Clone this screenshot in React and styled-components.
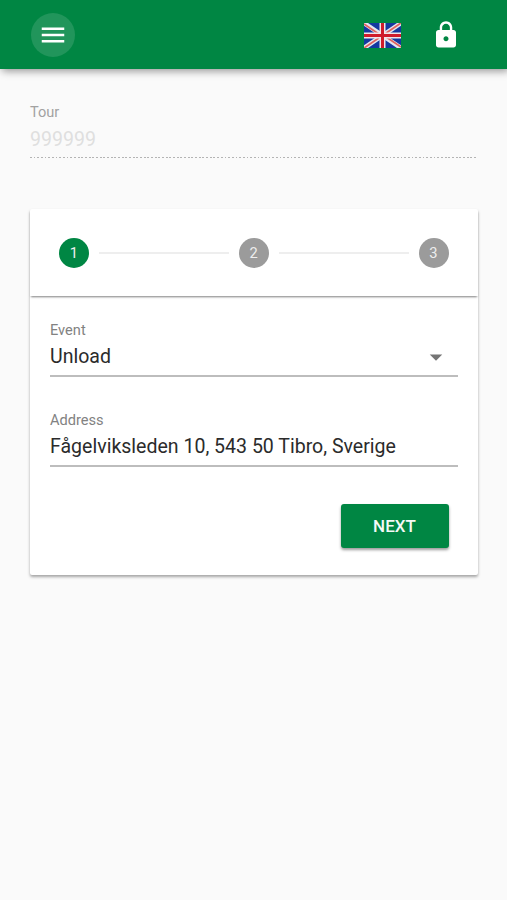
import React from 'react';
import styled, { createGlobalStyle } from 'styled-components';

const GlobalStyle = createGlobalStyle`
  * {
    box-sizing: border-box;
  }

  body {
    margin: 0;
    background-color: #fafafa;
    font-family: Roboto, sans-serif;
    color: #212121;
  }
`;

const Page = styled.div`
  min-height: 900px;
`;

const Toolbar = styled.header`
  display: flex;
  align-items: center;
  height: 69px;
  padding: 1px 46px 0 30.5px;
  background-color: #008643;
  box-shadow: 2px 2px 8px rgba(0, 0, 0, 0.42);
`;

const MenuButton = styled.button`
  display: flex;
  align-items: center;
  justify-content: center;
  width: 44px;
  height: 44px;
  margin-right: auto;
  padding: 0;
  border: 0;
  border-radius: 50%;
  background-color: #21955b;
`;

const Icon = styled.svg`
  display: block;
  width: ${({ $size }) => $size}px;
  height: ${({ $size }) => $size}px;
  fill: ${({ $color }) => $color || '#ffffff'};
`;

const Flag = styled.svg`
  display: block;
  width: 37px;
  height: 25px;
  margin-right: 30px;
`;

const Content = styled.main`
  padding: 34px 29.5px 0 30px;
`;

const Field = styled.div`
  height: 56px;
  border-bottom: 2px solid #bdbdbd;
`;

const DisabledField = styled(Field)`
  height: 55px;
  border-bottom: 0;
  background: repeating-linear-gradient(
      to right,
      #b4b4b4 0,
      #b4b4b4 1.8px,
      transparent 1.8px,
      transparent 3.67px
    )
    0 100% / 100% 1.5px no-repeat;
`;

const Label = styled.div`
  font-size: 14.6px;
  line-height: 18px;
  color: ${({ $disabled }) => ($disabled ? '#a2a2a2' : '#828282')};
`;

const Value = styled.div`
  display: flex;
  align-items: center;
  justify-content: space-between;
  height: 24px;
  margin-top: ${({ $disabled }) => ($disabled ? 7 : 6)}px;
  padding-right: 7px;
  font-size: 19.55px;
  line-height: 24px;
  white-space: nowrap;
  color: ${({ $disabled }) => ($disabled ? '#dfdfdf' : '#2b2b2b')};
`;

const Card = styled.section`
  margin-top: 51px;
  border-radius: 2px;
  background-color: #ffffff;
  box-shadow: 0 2px 3px rgba(0, 0, 0, 0.34);
`;

const Steps = styled.div`
  display: flex;
  align-items: center;
  gap: 10px;
  height: 87px;
  padding: 0 29px;
  box-shadow: 0 2px 2px -1px rgba(0, 0, 0, 0.5);
`;

const Step = styled.div`
  flex: none;
  width: 30px;
  height: 30px;
  border-radius: 50%;
  background-color: ${({ $active }) => ($active ? '#008643' : '#9b9b9b')};
  font-size: 14.7px;
  line-height: 30px;
  text-align: center;
  color: #eeeeee;
`;

const StepLine = styled.div`
  flex: 1;
  height: 2px;
  background-color: #eeeeee;
`;

const Form = styled.div`
  display: flex;
  flex-direction: column;
  gap: 34px;
  height: 279px;
  padding: 24.5px 19.5px 0 20px;
`;

const NextButton = styled.button`
  align-self: flex-end;
  width: 108px;
  height: 44px;
  margin: 3.5px 9.5px 0 0;
  padding: 0;
  border: 0;
  border-radius: 3px;
  background-color: #008643;
  box-shadow: 0 2px 3px rgba(0, 0, 0, 0.4);
  font-family: inherit;
  font-size: 17px;
  font-weight: 500;
  line-height: 44px;
  color: #f4faf6;
`;

const UnionJack = () => (
  <Flag viewBox="0 0 37 25" preserveAspectRatio="none">
    <path fill="#1538a0" d="M0 0h37v25H0z" />
    <path stroke="#e4e6f0" strokeWidth="4.5" d="M0 0l37 25M37 0L0 25" />
    <path stroke="#e0625f" strokeWidth="1.8" d="M0 1l17 11.5M37 0L20 11.5M37 24L20 12.5M0 25l17-11.5" />
    <path stroke="#f0e6ea" strokeWidth="6" d="M18.5 0v25M0 12.5h37" />
    <path stroke="#cf1b2b" strokeWidth="3" d="M18.5 0v25M0 12.5h37" />
  </Flag>
);

const App = () => {
  return (
    <Page>
      <GlobalStyle />
      <Toolbar>
        <MenuButton aria-label="Menu">
          <Icon $size={30} viewBox="0 0 24 24">
            <path d="M3 18h18v-2H3v2zm0-5h18v-2H3v2zm0-7v2h18V6H3z" />
          </Icon>
        </MenuButton>
        <UnionJack />
        <Icon $size={30} viewBox="0 0 24 24">
          <path d="M18 8h-1V6c0-2.76-2.24-5-5-5S7 3.24 7 6v2H6c-1.1 0-2 .9-2 2v10c0 1.1.9 2 2 2h12c1.1 0 2-.9 2-2V10c0-1.1-.9-2-2-2zm-6 9c-1.1 0-2-.9-2-2s.9-2 2-2 2 .9 2 2-.9 2-2 2zm3.1-9H8.9V6c0-1.71 1.39-3.1 3.1-3.1s3.1 1.39 3.1 3.1v2z" />
        </Icon>
      </Toolbar>
      <Content>
        <DisabledField>
          <Label $disabled>Tour</Label>
          <Value $disabled>999999</Value>
        </DisabledField>
        <Card>
          <Steps>
            <Step $active>1</Step>
            <StepLine />
            <Step>2</Step>
            <StepLine />
            <Step>3</Step>
          </Steps>
          <Form>
            <Field>
              <Label>Event</Label>
              <Value>
                Unload
                <Icon $size={30} $color="#757575" viewBox="0 0 24 24">
                  <path d="M7 10l5 5 5-5z" />
                </Icon>
              </Value>
            </Field>
            <Field>
              <Label>Address</Label>
              <Value>Fågelviksleden 10, 543 50 Tibro, Sverige</Value>
            </Field>
            <NextButton>NEXT</NextButton>
          </Form>
        </Card>
      </Content>
    </Page>
  );
};

export default App;
